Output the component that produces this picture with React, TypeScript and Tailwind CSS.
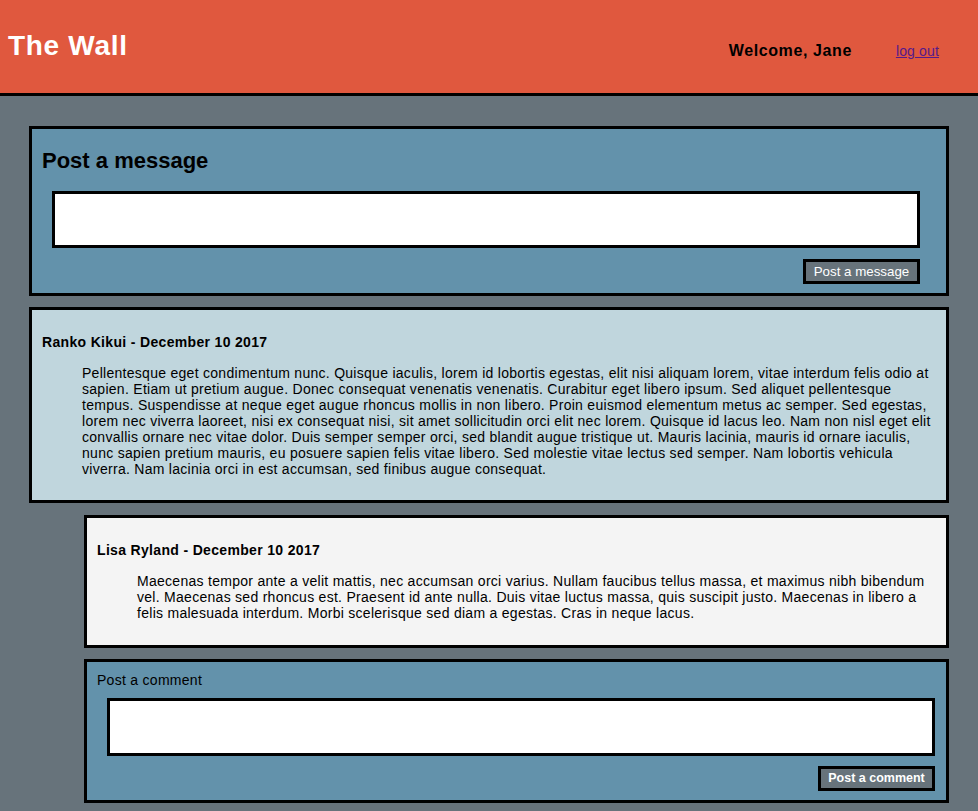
const posts = [
  {
    author: 'Ranko Kikui',
    date: 'December 10 2017',
    text: 'Pellentesque eget condimentum nunc. Quisque iaculis, lorem id lobortis egestas, elit nisi aliquam lorem, vitae interdum felis odio at sapien. Etiam ut pretium augue. Donec consequat venenatis venenatis. Curabitur eget libero ipsum. Sed aliquet pellentesque tempus. Suspendisse at neque eget augue rhoncus mollis in non libero. Proin euismod elementum metus ac semper. Sed egestas, lorem nec viverra laoreet, nisi ex consequat nisi, sit amet sollicitudin orci elit nec lorem. Quisque id lacus leo. Nam non nisl eget elit convallis ornare nec vitae dolor. Duis semper semper orci, sed blandit augue tristique ut. Mauris lacinia, mauris id ornare iaculis, nunc sapien pretium mauris, eu posuere sapien felis vitae libero. Sed molestie vitae lectus sed semper. Nam lobortis vehicula viverra. Nam lacinia orci in est accumsan, sed finibus augue consequat.',
    comments: [
      {
        author: 'Lisa Ryland',
        date: 'December 10 2017',
        text: 'Maecenas tempor ante a velit mattis, nec accumsan orci varius. Nullam faucibus tellus massa, et maximus nibh bibendum vel. Maecenas sed rhoncus est. Praesent id ante nulla. Duis vitae luctus massa, quis suscipit justo. Maecenas in libero a felis malesuada interdum. Morbi scelerisque sed diam a egestas. Cras in neque lacus.',
      },
    ],
  },
];

const Entry = ({ author, date, text, className }: { author: string; date: string; text: string; className: string }) => (
  <div className={`border-[3px] border-black pl-[10px] pr-[10px] pt-[24px] ${className}`}>
    <h4 className="text-[14px] leading-[16px] font-bold tracking-[0.33px]">
      {author} - {date}
    </h4>
    <p className="mt-[15px] ml-[40px] text-[14px] leading-[16px] tracking-[0.28px]">{text}</p>
  </div>
);

const App = () => {
  return (
    <div className="min-h-[811px] bg-[#67737b] text-black font-['Liberation_Sans',Arial,sans-serif]">
      <header className="h-[96px] bg-[#e0583e] border-b-[3px] border-black flex items-baseline pl-[8px] pr-[39px] pt-[30px]">
        <h1 className="text-[28px] leading-[32px] font-bold text-white tracking-[0.7px]">The Wall</h1>
        <div className="ml-auto flex items-baseline gap-[44px] translate-y-[1px]">
          <span className="text-[16px] font-bold tracking-[0.6px]">Welcome, Jane</span>
          <a href="#" className="text-[14px] text-[#551a8b] underline tracking-[0.15px]">
            log out
          </a>
        </div>
      </header>

      <main className="px-[29px] pt-[30px] pb-[20px]">
        <div className="border-[3px] border-black bg-[#6392ab] pt-[19px] pb-[9px] flex flex-col">
          <h2 className="pl-[10px] text-[22px] leading-[25px] font-bold">Post a message</h2>
          <textarea className="block mt-[18px] ml-[20px] mr-[26px] h-[57px] border-[3px] border-black bg-white resize-none outline-none" />
          <div className="flex justify-end mr-[26px] mt-[11px]">
            <button className="h-[25px] w-[117px] border-[3px] border-black bg-[#67737b] text-white text-[13.33px] leading-[15px]">
              Post a message
            </button>
          </div>
        </div>

        {posts.map(post => (
          <div key={post.author}>
            <Entry author={post.author} date={post.date} text={post.text} className="mt-[11px] pb-[23px] bg-[#c0d6dd]" />
            <div className="ml-[55px]">
              {post.comments.map(c => (
                <Entry key={c.author} author={c.author} date={c.date} text={c.text} className="mt-[12px] pb-[24px] bg-[#f4f4f4]" />
              ))}
              <div className="mt-[11px] border-[3px] border-black bg-[#6392ab] pt-[10px] pb-[9px] flex flex-col">
                <label className="pl-[10px] text-[14px] leading-[16px] tracking-[0.28px]">Post a comment</label>
                <textarea className="block mt-[10px] ml-[20px] mr-[11px] h-[58px] border-[3px] border-black bg-white resize-none outline-none" />
                <div className="flex justify-end mr-[11px] mt-[10px]">
                  <button className="h-[25px] w-[117px] border-[3px] border-black bg-[#67737b] text-white text-[12.5px] font-bold leading-[15px]">
                    Post a comment
                  </button>
                </div>
              </div>
            </div>
          </div>
        ))}
      </main>
    </div>
  );
};

export default App;
